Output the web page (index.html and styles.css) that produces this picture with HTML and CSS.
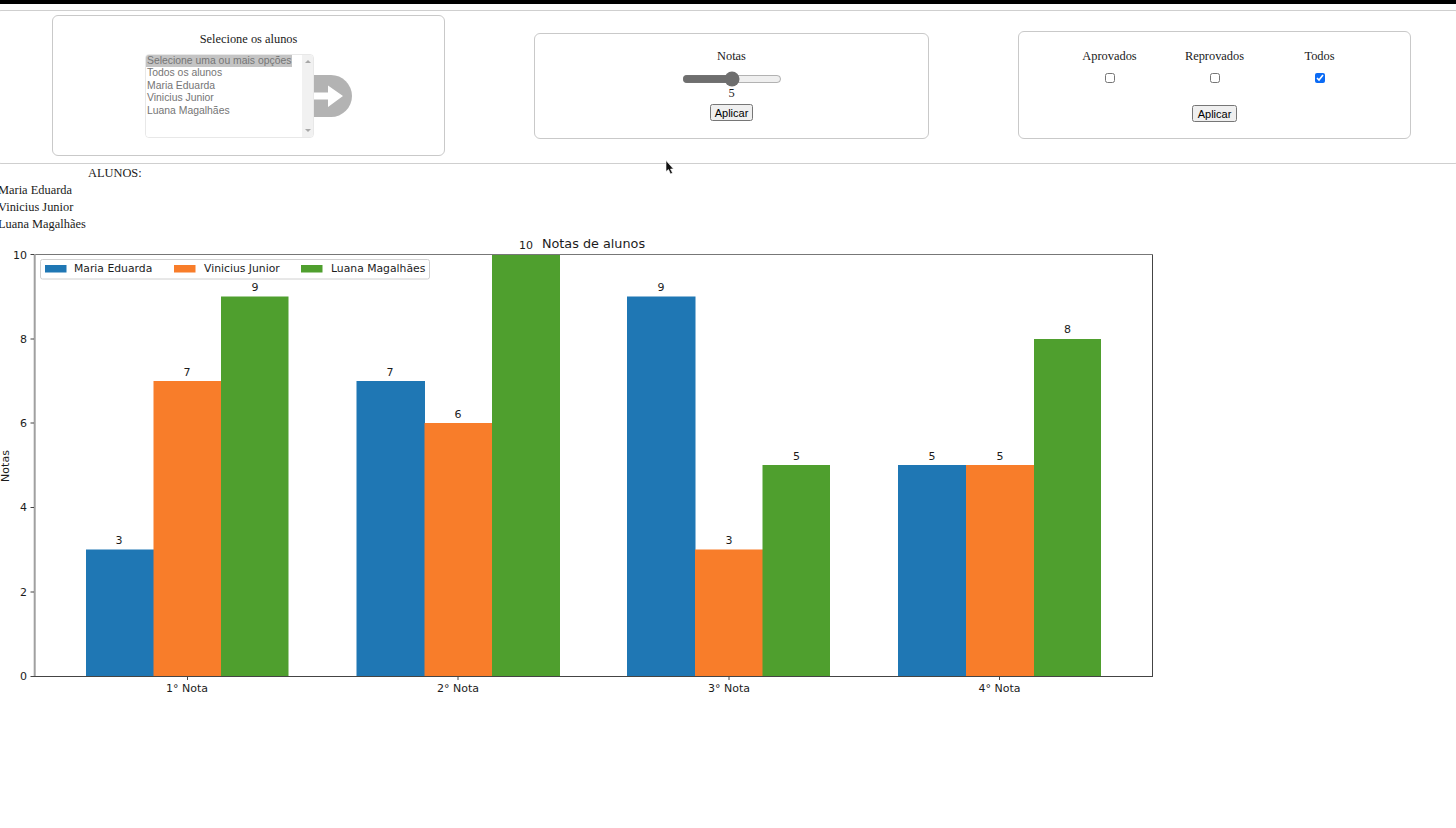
FILE: index.html
```html
<!DOCTYPE html>
<html lang="pt-BR">
<head>
    <meta charset="UTF-8">
    <meta name="viewport" content="width=device-width, initial-scale=1.0">
    <title>Notas de alunos</title>
    <link rel="stylesheet" href="styles.css">
</head>
<body>
    <div class="top-bar"></div>

    <div class="filters">
        <div class="card card-alunos">
            <p class="card-title">Selecione os alunos</p>
            <div class="select-row">
                <div class="select-box">
                    <select class="student-select" multiple size="6">
                        <option selected>Selecione uma ou mais opções</option>
                        <option>Todos os alunos</option>
                        <option>Maria Eduarda</option>
                        <option>Vinicius Junior</option>
                        <option>Luana Magalhães</option>
                    </select>
                    <div class="scroll-track">
                        <span class="scroll-up"></span>
                        <span class="scroll-down"></span>
                    </div>
                </div>
                <svg class="go-arrow" width="38" height="42" viewBox="0 0 38 42">
                    <path d="M0 0H17A21 21 0 0 1 17 42H0Z" fill="#b3b3b3"/>
                    <path d="M0 17.5H14V10.5L29 21L14 32V24.5H0Z" fill="#ffffff"/>
                </svg>
            </div>
        </div>

        <div class="card card-notas">
            <p class="card-title">Notas</p>
            <input class="grade-range" type="range" min="0" max="10" value="5">
            <span class="grade-value">5</span>
            <button class="apply-btn">Aplicar</button>
        </div>

        <div class="card card-status">
            <div class="status-grid">
                <label class="status-item">Aprovados <input type="checkbox"></label>
                <label class="status-item">Reprovados <input type="checkbox"></label>
                <label class="status-item">Todos <input type="checkbox" checked></label>
            </div>
            <button class="apply-btn">Aplicar</button>
        </div>
    </div>

    <div class="students">
        <h2 class="students-title">ALUNOS:</h2>
        <p class="student-name">Maria Eduarda</p>
        <p class="student-name">Vinicius Junior</p>
        <p class="student-name">Luana Magalhães</p>
    </div>

    <!-- viewBox usa as coordenadas da pagina -->
    <svg class="chart" width="1160" height="468" viewBox="0 234 1160 468">
        <g class="bar-blue">
            <rect x="86" y="549.5" width="68" height="126.5"/>
            <rect x="356.5" y="381" width="68.5" height="295"/>
            <rect x="627" y="296.5" width="68.5" height="379.5"/>
            <rect x="898" y="465" width="68.5" height="211"/>
        </g>
        <g class="bar-orange">
            <rect x="153.5" y="381" width="68" height="295"/>
            <rect x="424.5" y="423" width="68" height="253"/>
            <rect x="695" y="549.5" width="68" height="126.5"/>
            <rect x="966" y="465" width="68.5" height="211"/>
        </g>
        <g class="bar-green">
            <rect x="221" y="296.5" width="67.5" height="379.5"/>
            <rect x="492" y="254.5" width="68" height="421.5"/>
            <rect x="762.5" y="465" width="67.5" height="211"/>
            <rect x="1034" y="339" width="67" height="337"/>
        </g>

        <path class="axis-top" d="M34 254.5H1152.5"/>
        <path class="axis-left" d="M34.7 254V677"/>
        <path class="axis-solid" d="M34 676.5H1152.5M1152.5 254.5V677"/>

        <g class="ticks">
            <path d="M30.5 676.5H34M30.5 592H34M30.5 507.5H34M30.5 423H34M30.5 339H34M30.5 254.5H34"/>
            <path d="M187.5 676.5V680M458 676.5V680M729 676.5V680M999.5 676.5V680"/>
        </g>

        <g class="tick-labels y-labels">
            <text x="27" y="680">0</text>
            <text x="27" y="596">2</text>
            <text x="27" y="511">4</text>
            <text x="27" y="427">6</text>
            <text x="27" y="343">8</text>
            <text x="27" y="259">10</text>
        </g>
        <g class="tick-labels x-labels">
            <text x="187" y="692">1° Nota</text>
            <text x="458" y="692">2° Nota</text>
            <text x="729" y="692">3° Nota</text>
            <text x="999.5" y="692">4° Nota</text>
        </g>
        <g class="tick-labels x-labels">
            <text x="119" y="544">3</text>
            <text x="187" y="376">7</text>
            <text x="255" y="291">9</text>
            <text x="390" y="376">7</text>
            <text x="458" y="418">6</text>
            <text x="526" y="249">10</text>
            <text x="661" y="291">9</text>
            <text x="729" y="544">3</text>
            <text x="796.5" y="460">5</text>
            <text x="932" y="460">5</text>
            <text x="1000" y="460">5</text>
            <text x="1067.5" y="333">8</text>
        </g>

        <text class="chart-title" x="593.5" y="248">Notas de alunos</text>
        <text class="axis-label" transform="translate(8.5 466) rotate(-90)">Notas</text>

        <rect class="legend-box" x="40.5" y="259.5" width="389" height="19.5" rx="2"/>
        <rect class="bar-blue" x="45" y="265" width="21.5" height="7.5"/>
        <rect class="bar-orange" x="174" y="265" width="21.5" height="7.5"/>
        <rect class="bar-green" x="301" y="265" width="21.5" height="7.5"/>
        <text class="legend-text" x="74" y="272">Maria Eduarda</text>
        <text class="legend-text" x="204" y="272">Vinicius Junior</text>
        <text class="legend-text" x="331" y="272">Luana Magalhães</text>
    </svg>

    <svg class="mouse-cursor" width="10" height="15" viewBox="0 0 10 15">
        <path d="M1 0.5V11.5L3.5 9.5L5.5 14L7.5 13L5.5 9H8.5Z" fill="#111111" stroke="#ffffff" stroke-width="0.6"/>
    </svg>
</body>
</html>
```

FILE: styles.css
```css
body {
    margin: 0;
    background: #ffffff;
    color: #1a1a1a;
    font-family: "Liberation Serif", serif;
    font-size: 12.4px;
    overflow-x: hidden;
}

.top-bar {
    height: 4px;
    background: #000000;
}

.filters {
    display: flex;
    align-items: flex-start;
    gap: 89px;
    height: 148px;
    margin: 6px -4px 0;
    padding: 4px 0 0 55px;
    border: 1px solid #cfcfcf;
    border-radius: 5px;
}

.card {
    box-sizing: border-box;
    display: flex;
    flex-direction: column;
    align-items: center;
    border: 1px solid #c9c9c9;
    border-radius: 6px;
}

.card-title {
    margin: 0;
    line-height: 15px;
}

.card-alunos {
    width: 393px;
    height: 141px;
    padding-top: 16px;
}

.select-row {
    display: flex;
    align-items: center;
    margin-top: 7px;
}

.select-box {
    box-sizing: border-box;
    display: flex;
    width: 169px;
    height: 84px;
    border: 1px solid #e8e8e8;
    border-radius: 4px;
    overflow: hidden;
}

.student-select {
    flex: 1;
    min-width: 0;
    padding: 0;
    border: none;
    outline: none;
    color: #757575;
    font-family: "Liberation Sans", sans-serif;
    font-size: 10.4px;
}

.student-select option {
    width: fit-content;
    min-height: 0;
    padding: 0 1px 1px;
}

.student-select option:nth-child(even) {
    padding-bottom: 2px;
}

.student-select option:checked {
    color: #757575;
    background: #c4c4c4 linear-gradient(#c4c4c4, #c4c4c4);
}

.scroll-track {
    display: flex;
    flex-direction: column;
    justify-content: space-between;
    align-items: center;
    width: 11px;
    padding: 5px 0;
    background: #f1f1f1;
}

.scroll-up,
.scroll-down {
    width: 0;
    height: 0;
    border-left: 3px solid transparent;
    border-right: 3px solid transparent;
}

.scroll-up {
    border-bottom: 3px solid #a8a8a8;
}

.scroll-down {
    border-top: 3px solid #a8a8a8;
}

.go-arrow {
    display: block;
}

.card-notas {
    width: 395px;
    height: 106px;
    margin-top: 18px;
    padding-top: 15px;
}

.grade-range {
    width: 100px;
    height: 10px;
    margin: 10px 0 0;
    accent-color: #6e6e6e;
}

.grade-value {
    margin-top: 2px;
    line-height: 15px;
}

.apply-btn {
    box-sizing: border-box;
    width: 43px;
    height: 17px;
    margin: 3px 0 0;
    padding: 0;
    font-family: "Liberation Sans", sans-serif;
    font-size: 11px;
}

.card-status {
    width: 393px;
    height: 108px;
    margin-top: 16px;
    padding-top: 17px;
}

.status-grid {
    display: grid;
    grid-template-columns: repeat(3, 105px);
    margin-bottom: 22px;
}

.status-item {
    display: flex;
    flex-direction: column;
    align-items: center;
    gap: 9px;
    line-height: 15px;
}

.status-item input {
    width: 10px;
    height: 10px;
    margin: 0;
    accent-color: #0b6bf5;
}

.card-status .apply-btn {
    width: 45px;
    margin: 0;
}

.students {
    box-sizing: border-box;
    height: 70px;
    padding-top: 1px;
    line-height: 17px;
    margin-left: -2px;
}

.students-title {
    margin: 0 0 0 90px;
    font-size: 12.4px;
    font-weight: normal;
    line-height: 17px;
}

.student-name {
    margin: 0;
}

.chart {
    display: block;
}

.chart text {
    font-family: "DejaVu Sans", sans-serif;
    fill: #1c1c1c;
}

.bar-blue {
    fill: #1f77b4;
}

.bar-orange {
    fill: #f87d2a;
}

.bar-green {
    fill: #4f9f2e;
}

.axis-top {
    fill: none;
    stroke: #777777;
    stroke-width: 1;
}

.axis-left {
    fill: none;
    stroke: #a0a0a0;
    stroke-width: 2;
}

.axis-solid,
.ticks path {
    fill: none;
    stroke: #444444;
    stroke-width: 1;
}

.chart .tick-labels text {
    font-size: 11px;
}

.y-labels {
    text-anchor: end;
}

.x-labels {
    text-anchor: middle;
}

.chart .chart-title {
    font-size: 12.8px;
    text-anchor: middle;
}

.chart .axis-label {
    font-size: 11px;
    text-anchor: middle;
}

.legend-box {
    fill: #ffffff;
    stroke: #d0d0d0;
    stroke-width: 1;
}

.chart .legend-text {
    font-size: 10.8px;
}

.mouse-cursor {
    position: absolute;
    left: 665px;
    top: 160px;
}
```
